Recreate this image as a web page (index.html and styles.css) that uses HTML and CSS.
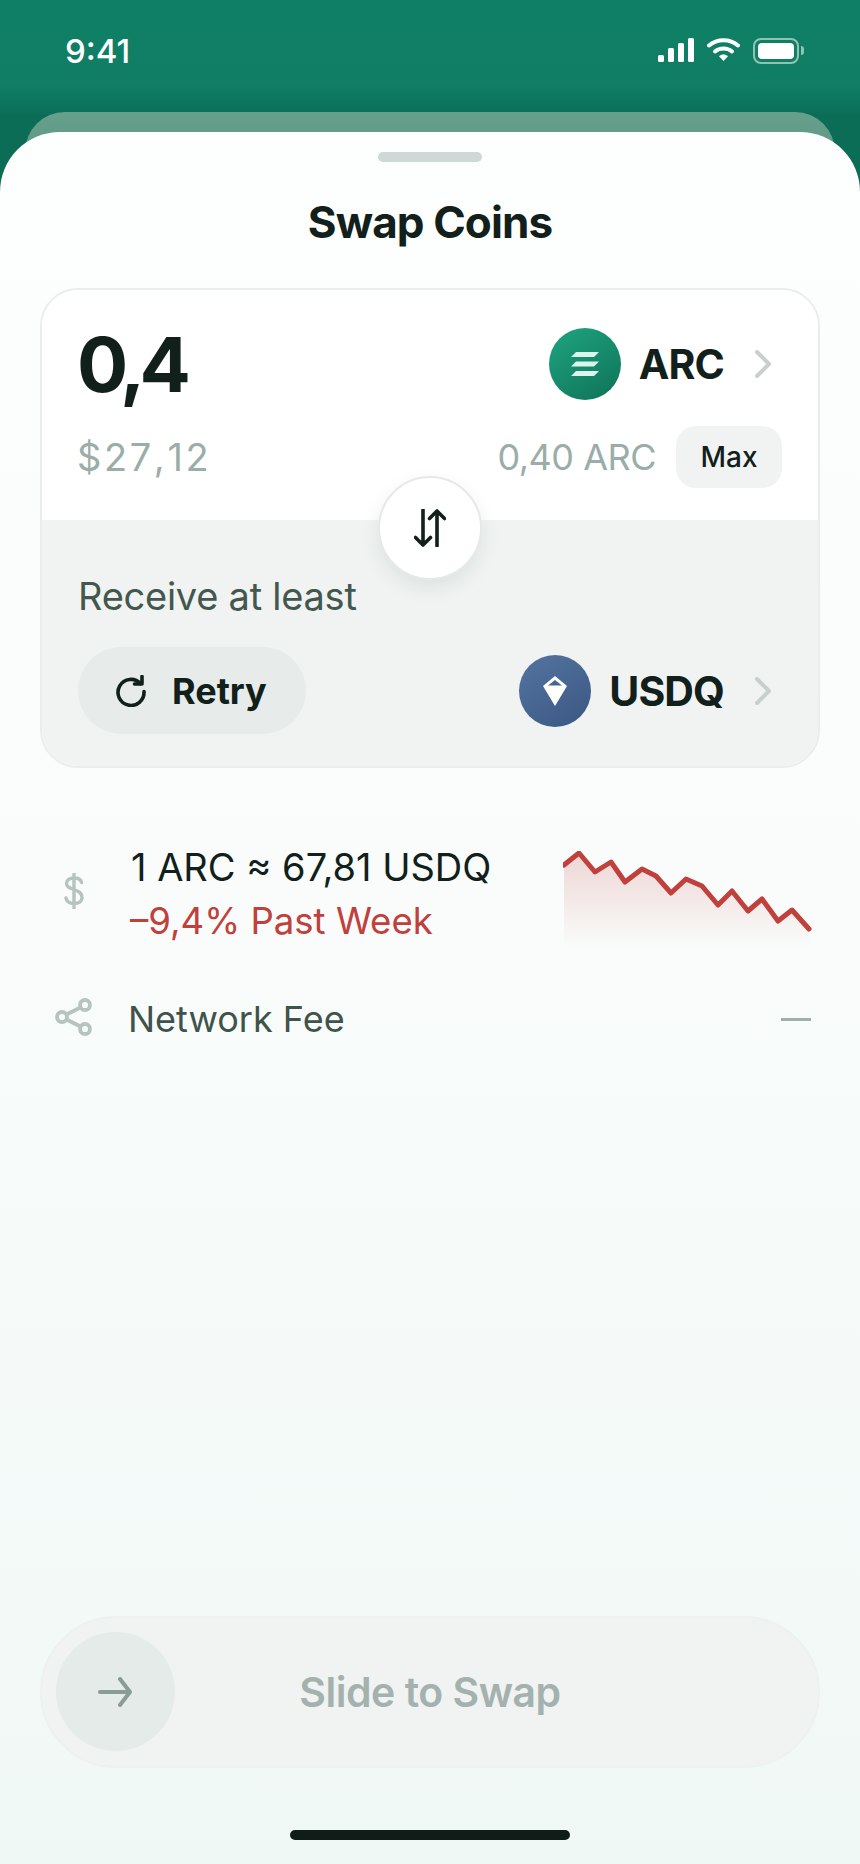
FILE: index.html
```html
<!DOCTYPE html>
<html lang="en">
<head>
  <meta charset="UTF-8">
  <meta name="viewport" content="width=device-width, initial-scale=1.0">
  <title>Swap Coins</title>
  <link rel="stylesheet" href="styles.css">
</head>
<body>
  <div class="status-bar">
    <span class="time">9:41</span>
    <div class="status-icons">
      <svg class="signal" width="36" height="24" viewBox="0 0 36 24">
        <rect x="0" y="17" width="6" height="7" rx="1.5"/>
        <rect x="10" y="10" width="6" height="14" rx="1.5"/>
        <rect x="20" y="5" width="6" height="19" rx="1.5"/>
        <rect x="30" y="0" width="6" height="24" rx="1.5"/>
      </svg>
      <svg class="wifi" width="33" height="23" viewBox="0 0 33 23">
        <path d="M2 7.5C10 .5 23 .5 31 7.5" fill="none" stroke="#fff" stroke-width="4" stroke-linecap="round"/>
        <path d="M8 13.5C12.5 9.5 20.5 9.5 25 13.5" fill="none" stroke="#fff" stroke-width="4" stroke-linecap="round"/>
        <path d="M12 18.2C14.5 16 18.5 16 21 18.2L16.5 23Z" fill="#fff"/>
      </svg>
      <div class="battery"><div class="battery-fill"></div></div>
      <div class="battery-nub"></div>
    </div>
  </div>
  <div class="back-card"></div>

  <div class="sheet">
    <div class="handle"></div>
    <h1 class="title">Swap Coins</h1>

    <div class="swap-card">
      <div class="pay">
        <div class="row">
          <span class="amount">0,4</span>
          <div class="coin-pick">
            <span class="coin coin-arc">
              <svg width="30" height="24" viewBox="0 0 30 24">
                <path d="M6 0H29L24 5H1ZM6 9.5H29L24 14.5H1ZM6 19H29L24 24H1Z" fill="#d9f5ec"/>
              </svg>
            </span>
            <span class="coin-name">ARC</span>
            <svg class="chevron" width="16" height="28" viewBox="0 0 16 28"><path d="M2 2L14 14L2 26"/></svg>
          </div>
        </div>
        <div class="row row-sub">
          <span class="usd">$27,12</span>
          <div class="balance">
            <span class="balance-text">0,40 ARC</span>
            <button class="max-btn">Max</button>
          </div>
        </div>
      </div>

      <button class="flip-btn">
        <svg width="32" height="38" viewBox="0 0 32 38">
          <path d="M9 1V36M1.5 28.5L9 36L16.5 28.5M23 37V2M15.5 9.5L23 2L30.5 9.5"/>
        </svg>
      </button>

      <div class="receive">
        <div class="receive-label">Receive at least</div>
        <div class="row">
          <button class="retry-btn">
            <svg width="32" height="32" viewBox="0 0 32 32">
              <path d="M25.5 8.5A13 13 0 1 0 29 16.5"/>
              <path d="M27 1.5V9H19.5" class="retry-head"/>
            </svg>
            <span>Retry</span>
          </button>
          <div class="coin-pick">
            <span class="coin coin-usdq">
              <svg width="26" height="30" viewBox="0 0 26 30">
                <path d="M13 0L25 10L13 30L1 10Z" fill="#fff"/>
                <path d="M13 4L20 9.5H6Z" fill="#47668f"/>
              </svg>
            </span>
            <span class="coin-name">USDQ</span>
            <svg class="chevron" width="16" height="28" viewBox="0 0 16 28"><path d="M2 2L14 14L2 26"/></svg>
          </div>
        </div>
      </div>
    </div>

    <div class="rate-row">
      <svg class="info-icon" width="20" height="36" viewBox="0 0 20 36">
        <path d="M10 1V35M17.5 9.5C17 6.5 14 5 10 5C5.5 5 2.5 7 2.5 10.5C2.5 18 18 15 18 24.5C18 28.5 14.5 30.5 10 30.5C5.5 30.5 2.5 28.5 2 25"/>
      </svg>
      <div class="rate-text">
        <div class="rate-value">1 ARC ≈ 67,81 USDQ</div>
        <div class="rate-change">–9,4% Past Week</div>
      </div>
      <svg class="chart" width="250" height="96" viewBox="0 0 250 96">
        <defs>
          <linearGradient id="chartFill" x1="0" y1="0" x2="0" y2="1">
            <stop offset="0" stop-color="#c0403c" stop-opacity="0.2"/>
            <stop offset="1" stop-color="#c0403c" stop-opacity="0"/>
          </linearGradient>
        </defs>
        <path fill="url(#chartFill)" d="M1 14L16 2L32 21L48 11L62 31L79 18L93 25L108 42L123 28L139 35L155 54L169 40L185 60L199 48L215 70L229 59L246 78V96H1Z"/>
        <path class="chart-line" d="M1 14L16 2L32 21L48 11L62 31L79 18L93 25L108 42L123 28L139 35L155 54L169 40L185 60L199 48L215 70L229 59L246 78"/>
      </svg>
    </div>

    <div class="fee-row">
      <svg class="share-icon" width="38" height="38" viewBox="0 0 38 38">
        <circle cx="30" cy="7" r="5"/>
        <circle cx="7" cy="19" r="5"/>
        <circle cx="30" cy="31" r="5"/>
        <path d="M11.5 16.5L25.5 9.5M11.5 21.5L25.5 28.5"/>
      </svg>
      <span class="fee-label">Network Fee</span>
      <span class="fee-dash"></span>
    </div>

    <div class="slider">
      <div class="knob">
        <svg width="35" height="30" viewBox="0 0 35 30">
          <path d="M2 15H32M22 2L32 15L22 28"/>
        </svg>
      </div>
      <span class="slider-text">Slide to Swap</span>
    </div>

    <div class="home-bar"></div>
  </div>
</body>
</html>
```

FILE: styles.css
```css
* { margin: 0; padding: 0; box-sizing: border-box; }
body {
  font-family: Inter, 'Noto Sans', sans-serif;
  background: linear-gradient(#0f7f66 0, #0f7e65 85px, #0c6d57 115px, #0c6d57 100%);
  color: #12201c;
  width: 860px;
  height: 1864px;
  display: flex;
  flex-direction: column;
  overflow: hidden;
}
button { font-family: inherit; border: none; color: inherit; }

/* status bar */
.status-bar {
  height: 112px;
  flex-shrink: 0;
  padding: 32px 56px 0 65px;
  display: flex;
  justify-content: space-between;
  align-items: flex-start;
}
.time { color: #fff; font-size: 33px; font-weight: 500; line-height: 38px; }
.status-icons { display: flex; align-items: flex-start; margin-top: 6px; }
.signal { fill: #fff; margin-right: 13px; }
.wifi { margin-right: 13px; }
.battery {
  width: 46px;
  height: 26px;
  border: 2px solid #8fc4b3;
  border-radius: 8px;
  padding: 3px;
}
.battery-fill { width: 100%; height: 100%; background: #fff; border-radius: 4px; }
.battery-nub {
  width: 3px;
  height: 9px;
  margin: 8px 0 0 2px;
  background: #8fc4b3;
  border-radius: 0 3px 3px 0;
}

.back-card {
  height: 70px;
  flex-shrink: 0;
  margin: 0 25px;
  border-radius: 40px 40px 0 0;
  background: linear-gradient(#66a08d, #5a9380);
}

/* sheet */
.sheet {
  flex: 1;
  margin-top: -50px;
  position: relative;
  background: linear-gradient(#fdfefe, #f9fcfb 45%, #f0f8f6);
  border-radius: 60px 60px 0 0;
  display: flex;
  flex-direction: column;
}
.handle {
  width: 104px;
  height: 10px;
  margin: 20px auto 0;
  background: #cfd8d6;
  border-radius: 5px;
}
.title {
  text-align: center;
  font-size: 44px;
  font-weight: 700;
  letter-spacing: -0.9px;
  line-height: 50px;
  margin-top: 35px;
  color: #12201c;
}

/* swap card */
.swap-card {
  position: relative;
  margin: 41px 40px 0;
  border: 2px solid #e9eded;
  border-radius: 38px;
  overflow: hidden;
}
.pay { background: #fff; padding: 38px 36px 32px 35px; }
.row { display: flex; justify-content: space-between; align-items: center; }
.row-sub { margin-top: 26px; }
.amount { font-size: 76px; font-weight: 700; letter-spacing: -6px; line-height: 72px; }
.usd { font-size: 38px; color: #9bada8; line-height: 44px; font-kerning: none; letter-spacing: 2.6px; }
.balance-text { font-size: 36px; color: #9bada8; line-height: 44px; letter-spacing: -0.5px; }
.balance { display: flex; align-items: center; gap: 20px; }
.max-btn {
  width: 106px;
  height: 62px;
  background: #f0f3f2;
  border-radius: 20px;
  font-size: 28px;
  font-weight: 500;
}
.coin-pick { display: flex; align-items: center; margin-right: 11px; }
.coin {
  width: 72px;
  height: 72px;
  border-radius: 50%;
  display: flex;
  align-items: center;
  justify-content: center;
}
.coin-arc { background: linear-gradient(145deg, #1ea580, #0f7257); }
.coin-usdq { background: linear-gradient(145deg, #54749f, #3a5782); }
.coin-name { font-size: 41px; font-weight: 700; letter-spacing: -0.9px; margin-left: 18px; }
.chevron { margin-left: 31px; fill: none; stroke: #c9cfcd; stroke-width: 4; stroke-linecap: round; stroke-linejoin: round; }

.flip-btn {
  position: absolute;
  left: 336px;
  top: 186px;
  width: 104px;
  height: 104px;
  border-radius: 50%;
  background: #fff;
  border: 2px solid #e6e9e8;
  box-shadow: 0 8px 20px rgba(18, 32, 28, 0.08);
  display: flex;
  align-items: center;
  justify-content: center;
}
.flip-btn svg { fill: none; stroke: #12201c; stroke-width: 3.6; stroke-linecap: round; stroke-linejoin: round; }

.receive { background: #f0f3f2; padding: 54px 36px 32px 36px; }
.receive-label { font-size: 38px; letter-spacing: -0.25px; color: #43574f; line-height: 45px; margin: 0 0 28px 0; }
.retry-btn {
  width: 228px;
  height: 87px;
  background: #e7ecea;
  border-radius: 44px;
  display: flex;
  align-items: center;
  padding-left: 37px;
  gap: 25px;
  font-size: 36px;
  font-weight: 700;
}
.retry-btn svg { fill: none; stroke: #12201c; stroke-width: 3.6; stroke-linecap: round; }
.retry-head { stroke-linejoin: round; }

/* info rows */
.rate-row {
  display: flex;
  align-items: center;
  margin-top: 72px;
  padding: 0 47px 0 64px;
}
.info-icon { fill: none; stroke: #b6c4c0; stroke-width: 3.4; stroke-linecap: round; margin-top: -6px; }
.rate-text { margin-left: 47px; flex: 1; }
.rate-value { font-size: 38px; line-height: 54px; color: #12201c; }
.rate-change { font-size: 36.6px; line-height: 54px; color: #c0403c; margin-left: -1px; }
.chart { margin-top: 10px; }
.chart-line { fill: none; stroke: #c0403c; stroke-width: 5; stroke-linejoin: round; stroke-linecap: round; }

.fee-row {
  display: flex;
  align-items: center;
  margin-top: 49px;
  padding: 0 49px 0 55px;
}
.share-icon { fill: none; stroke: #b6c4c0; stroke-width: 3.8; margin-top: -4px; }
.fee-label { font-size: 36px; color: #3f524b; margin-left: 35px; flex: 1; }
.fee-dash { width: 30px; height: 3px; background: #9fb0ab; }

/* slider */
.slider {
  position: relative;
  margin: auto 40px 0 40px;
  height: 152px;
  border-radius: 76px;
  background: #f0f3f2;
  border: 2px solid #edf1f0;
  display: flex;
  align-items: center;
  justify-content: center;
}
.knob {
  position: absolute;
  left: 14px;
  top: 14px;
  width: 119px;
  height: 119px;
  border-radius: 50%;
  background: #e5ebe9;
  display: flex;
  align-items: center;
  justify-content: center;
}
.knob svg { fill: none; stroke: #8a9c96; stroke-width: 4; stroke-linecap: round; stroke-linejoin: round; }
.slider-text { font-size: 41px; font-weight: 600; color: #a3b2ae; letter-spacing: -0.5px; }

.home-bar {
  width: 280px;
  height: 10px;
  margin: 62px auto 24px;
  background: #101c18;
  border-radius: 5px;
}
```
